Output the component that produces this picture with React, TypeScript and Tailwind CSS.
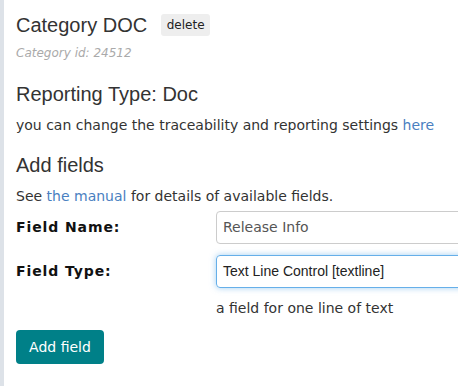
import React from "react";

export default function App() {
  const verdana = { fontFamily: '"DejaVu Sans", Verdana, sans-serif' };
  const arial = { fontFamily: '"Liberation Sans", Arial, sans-serif' };
  return (
    <div className="w-[458px] h-[386px] overflow-hidden bg-white flex">
      <div className="w-[4px] shrink-0 bg-[#dde2e8]" />
      <div className="flex-1 pl-[12px] pt-[13px] text-[#333]" style={verdana}>
        <div className="flex items-center h-[24px]">
          <h1 className="text-[20px] leading-[24px] text-[#333] font-normal" style={arial}>
            Category DOC
          </h1>
          <span className="ml-[14px] bg-[#eeeeee] rounded-[3px] w-[49px] h-[22px] flex items-center justify-center text-[12px] text-[#222]">
            delete
          </span>
        </div>
        <div className="mt-[8px] text-[12px] italic text-[#aaaaaa] leading-[16px]">Category id: 24512</div>

        <h2 className="mt-[21px] text-[20px] leading-[24px] font-normal" style={arial}>
          Reporting Type: Doc
        </h2>
        <p className="mt-[9px] text-[14px] leading-[20px]">
          you can change the traceability and reporting settings <span className="text-[#4a7fc1]">here</span>
        </p>

        <h2 className="mt-[18px] text-[20px] leading-[24px] font-normal" style={arial}>
          Add fields
        </h2>
        <p className="mt-[9px] text-[14px] leading-[20px]">
          See <span className="text-[#4a7fc1]">the manual</span> for details of available fields.
        </p>

        <div className="mt-[5px] grid grid-cols-[200px_300px] items-start">
          <label className="pt-[6px] text-[14px] leading-[20px] font-bold tracking-[0.9px] text-[#111]">Field Name:</label>
          <div className="h-[33px] border border-[#cccccc] rounded-[4px] flex items-center pl-[6px] text-[14px] text-[#555]">
            Release Info
          </div>
          <label className="mt-[11px] pt-[6px] text-[14px] leading-[20px] font-bold tracking-[0.9px] text-[#111]">Field Type:</label>
          <div
            className="mt-[11px] h-[33px] border border-[#66afe9] rounded-[4px] flex items-center pl-[6px] text-[14px] text-[#222] shadow-[0_0_6px_rgba(102,175,233,0.6)]"
            style={arial}
          >
            Text Line Control [textline]
          </div>
          <div />
          <div className="mt-[10px] text-[14px] leading-[20px] text-[#333]">a field for one line of text</div>
        </div>

        <button className="mt-[12px] h-[34px] w-[88px] bg-[#008088] rounded-[4px] text-white text-[14px] flex items-center justify-center">
          Add field
        </button>
      </div>
    </div>
  );
}
